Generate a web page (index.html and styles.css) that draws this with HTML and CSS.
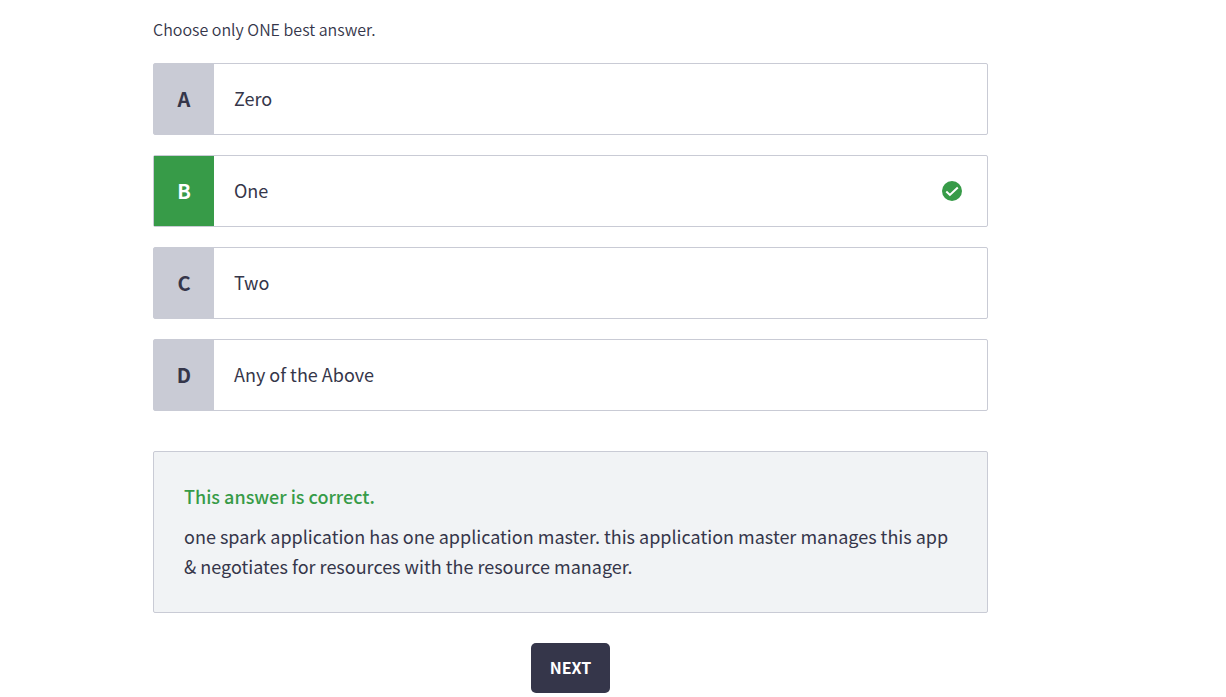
FILE: index.html
```html
<!DOCTYPE html>
<html lang="en">
<head>
<meta charset="utf-8">
<meta name="viewport" content="width=device-width, initial-scale=1">
<title>Quiz question</title>
<link rel="stylesheet" href="styles.css">
</head>
<body>
<main class="quiz">
  <p class="hint">Choose only ONE best answer.</p>
  <div class="answers">
    <button class="answer" type="button"><span class="letter">A</span><span class="label">Zero</span></button>
    <button class="answer correct" type="button"><span class="letter">B</span><span class="label">One</span>
      <svg class="check" viewBox="0 0 20 20" aria-hidden="true"><circle cx="10" cy="10" r="10"/><path d="M4.3 10.5l3.6 3.4 7.9-7.4"/></svg>
    </button>
    <button class="answer" type="button"><span class="letter">C</span><span class="label">Two</span></button>
    <button class="answer" type="button"><span class="letter">D</span><span class="label">Any of the Above</span></button>
  </div>
  <section class="feedback">
    <h2 class="verdict">This answer is correct.</h2>
    <p class="reason">one spark application has one application master. this application master manages this app &amp; negotiates for resources with the resource manager.</p>
  </section>
  <button class="next" type="button">NEXT</button>
</main>
</body>
</html>
```
FILE: styles.css
```css
* {
  box-sizing: border-box;
}

body {
  margin: 0;
  background: #fff;
  color: #35364a;
  font-family: "Source Sans Pro", "Noto Sans CJK SC", "Noto Sans", sans-serif;
  font-size: 18px;
  line-height: 30px;
}

button {
  font: inherit;
  color: inherit;
  cursor: pointer;
}

.quiz {
  display: flex;
  flex-direction: column;
  width: 68.1%;
  margin-left: 153px;
  padding: 17px 0 4px;
}

.hint {
  margin: 0 0 22px;
  font-size: 16px;
  font-weight: 350;
  line-height: 24px;
}

.answers {
  display: flex;
  flex-direction: column;
  gap: 20px;
}

.answer {
  display: flex;
  align-items: center;
  min-height: 72px;
  padding: 0 25px 0 0;
  border: 1px solid #c9cbd5;
  border-radius: 2px;
  background: #fff;
  text-align: left;
}

.letter {
  display: flex;
  align-items: center;
  justify-content: center;
  align-self: stretch;
  width: 60px;
  background: #c9cbd5;
  font-size: 20px;
  font-weight: 600;
}

.correct .letter {
  background: #379b48;
  color: #fff;
}

.label {
  flex: 1;
  padding: 0 20px 2px;
}

.check {
  width: 20px;
  height: 20px;
  fill: #379b48;
}

.check path {
  fill: none;
  stroke: #fff;
  stroke-width: 2;
}

.feedback {
  margin-top: 40px;
  padding: 29px 30px 31px;
  border: 1px solid #c9cbd5;
  border-radius: 2px;
  background: #f1f3f5;
}

.verdict {
  margin: 0 0 10px;
  color: #379b48;
  font-size: 18px;
  font-weight: 500;
}

.reason {
  margin: 0;
}

.next {
  align-self: center;
  height: 50px;
  margin-top: 30px;
  padding: 0 19px 2px;
  border: 0;
  border-radius: 5px;
  background: #35364a;
  color: #fff;
  font-size: 16px;
  font-weight: 600;
}
```
